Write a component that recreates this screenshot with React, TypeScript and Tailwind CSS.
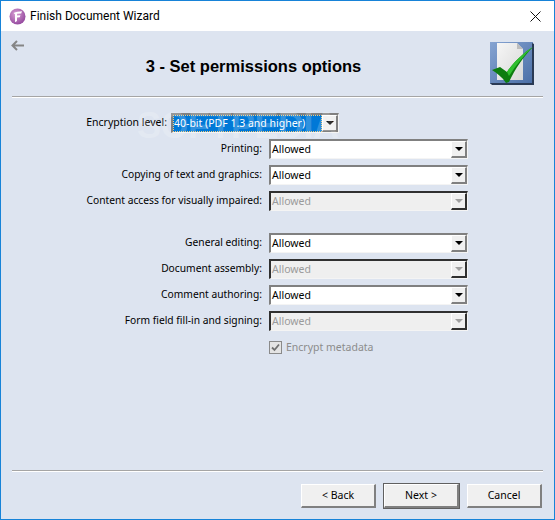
import React from 'react';

const rows = [
  { label: 'Printing:', disabled: false },
  { label: 'Copying of text and graphics:', disabled: false },
  { label: 'Content access for visually impaired:', disabled: true },
];

const rows2 = [
  { label: 'General editing:', disabled: false },
  { label: 'Document assembly:', disabled: true },
  { label: 'Comment authoring:', disabled: false },
  { label: 'Form field fill-in and signing:', disabled: true },
];

function AppLogo() {
  return (
    <svg width="17" height="17" viewBox="0 0 17 17" className="shrink-0">
      <defs>
        <radialGradient id="logoFill" cx="0.4" cy="0.35" r="0.75">
          <stop offset="0" stopColor="#d9a0d4" />
          <stop offset="1" stopColor="#8c3f98" />
        </radialGradient>
      </defs>
      <circle cx="8.5" cy="8.5" r="8" fill="url(#logoFill)" />
      <path d="M4.5 5 C7 3.6 10 3.8 13 3.2 L12.2 5.4 L8 5.8 V7.6 L11.4 7.2 L10.8 9.2 L8 9.6 V13 L6 14.2 V6.2 Z" fill="#fff" />
    </svg>
  );
}

function WizardIcon() {
  return (
    <svg width="46" height="46" viewBox="0 0 46 46" className="shrink-0">
      <defs>
        <linearGradient id="tile" x1="0" y1="0" x2="1" y2="1">
          <stop offset="0" stopColor="#86a4d2" />
          <stop offset="1" stopColor="#4a6ea6" />
        </linearGradient>
        <linearGradient id="sheet" x1="0" y1="0" x2="1" y2="1">
          <stop offset="0" stopColor="#f6f6f6" />
          <stop offset="1" stopColor="#d8d8d8" />
        </linearGradient>
      </defs>
      <rect x="1" y="1" width="43" height="42" fill="url(#tile)" />
      <path d="M1 42 H43 V2 L45 3 V44 H3 Z" fill="#2a3a55" />
      <path d="M8 2 H28 L34 8 V39 H8 Z" fill="url(#sheet)" />
      <path d="M28 2 L34 8 H28 Z" fill="#bdbdbd" />
      <path d="M3 29 L11 26 L18 31 C24 22 34 12 44 6 C35 15 26 28 20 41 L17 42 C13 36 8 32 3 29 Z" fill="#0d7d10" />
      <path d="M18 31 C24 22 34 12 44 6 C35 14 27 24 20 35 Z" fill="#2fbf2f" />
    </svg>
  );
}

function Combo({ value, disabled, focused, w }: { value: string; disabled?: boolean; focused?: boolean; w: string }) {
  return (
    <div
      className={`flex h-[20px] items-stretch border-t-2 border-l-2 border-b border-r border-b-[#f4f4f4] border-r-[#f4f4f4] ${w} ${
        disabled ? 'border-t-[#303030] border-l-[#303030] bg-[#efefef] text-[#9a9a9a]' : 'border-t-[#808080] border-l-[#808080] bg-white text-black'
      }`}
    >
      <div className="flex min-w-0 flex-1 items-center">
        {focused ? (
          <span className="flex h-full w-full items-center border border-dotted border-[#f5c97a] bg-[#0078d7] text-white">
            {value}
          </span>
        ) : (
          <span className="pt-[1px] pl-[1px]">{value}</span>
        )}
      </div>
      <div
        className={`flex w-[16px] items-center justify-center border-t border-l border-white bg-[#f0f0f0] border-b-2 border-r-2 ${
          disabled ? 'border-b-[#303030] border-r-[#303030]' : 'border-b-[#808080] border-r-[#808080]'
        }`}
      >
        <span
          className={`h-0 w-0 border-x-[4px] border-t-[4px] border-x-transparent ${
            disabled ? 'border-t-[#a0a0a0]' : 'border-t-black'
          }`}
        />
      </div>
    </div>
  );
}

function Row({ label, disabled }: { label: string; disabled: boolean }) {
  return (
    <div className="flex h-[26px] items-center">
      <div className="w-[257px] pr-[7px] text-right text-[10.25px]">{label}</div>
      <Combo value="Allowed" disabled={disabled} w="w-[199px]" />
    </div>
  );
}

function Btn({ label, active }: { label: string; active?: boolean }) {
  return (
    <button
      type="button"
      className={`flex h-[24px] w-[75px] items-center justify-center bg-[#f0f0f0] text-black border-t border-l border-white border-b-2 border-r-2 border-b-[#808080] border-r-[#808080] ${
        active ? 'outline outline-1 outline-[#606060]' : ''
      }`}
    >
      {label}
    </button>
  );
}

export default function App() {
  return (
    <div className="relative flex h-[520px] w-[555px] flex-col overflow-hidden border border-[#1783d8] bg-[#dde4f0] text-[10.5px] font-['Noto_Sans',sans-serif] text-black">
      {/* Title bar */}
      <div className="flex h-[30px] shrink-0 items-center bg-white pl-[8px] pr-[8px]">
        <AppLogo />
        <span className="ml-[4px] flex-1 text-[12px] font-['Roboto',sans-serif]">Finish Document Wizard</span>
        <svg width="11" height="11" viewBox="0 0 11 11" className="mr-[5px]">
          <path d="M0.5 0.5 L10.5 10.5 M10.5 0.5 L0.5 10.5" stroke="#111" strokeWidth="1" fill="none" />
        </svg>
      </div>

      {/* Header */}
      <div className="mx-[11px] flex h-[66px] shrink-0 border-b border-b-[#a5a5a5] shadow-[0_1px_0_#fff]">
        <svg width="13" height="11" viewBox="0 0 13 11" className="mt-[9px] ml-[-1px]">
          <path d="M6 1 L1.5 5.5 L6 10 M2 5.5 H13" stroke="#858585" strokeWidth="2" fill="none" />
        </svg>
        <div className="flex-1 pt-[25px] pr-[6px] text-center text-[16.5px] leading-[20px] font-bold font-['Liberation_Sans',sans-serif]">
          3 - Set permissions options
        </div>
        <div className="pt-[10px] pr-[8px]">
          <WizardIcon />
        </div>
      </div>

      {/* Form */}
      <div className="flex flex-1 flex-col pt-[13px] pl-[11px]">
        <div className="flex h-[26px] items-center">
          <div className="w-[159px] pr-[4px] text-right">Encryption level:</div>
          <Combo value="40-bit (PDF 1.3 and higher)" focused w="w-[168px]" />
        </div>
        {rows.map((r) => (
          <Row key={r.label} label={r.label} disabled={r.disabled} />
        ))}
        <div className="h-[16px]" />
        {rows2.map((r) => (
          <Row key={r.label} label={r.label} disabled={r.disabled} />
        ))}
        <div className="flex h-[26px] items-center pl-[257px] text-[#8c8c8c]">
          <span className="mr-[4px] flex h-[13px] w-[13px] items-center justify-center border border-[#8a8a8a] bg-[#e4e4e4]">
            <svg width="9" height="9" viewBox="0 0 9 9">
              <path d="M1 4.5 L3.5 7 L8 1.5" stroke="#707070" strokeWidth="1.8" fill="none" />
            </svg>
          </span>
          <span className="pt-[2px]">Encrypt metadata</span>
        </div>
      </div>

      {/* Footer */}
      <div className="mx-[11px] flex h-[49px] shrink-0 items-start justify-end gap-[8px] border-t border-t-[#a5a5a5] pt-[13px] pr-[1px] shadow-[inset_0_1px_0_#fff]">
        <Btn label="< Back" />
        <Btn label="Next >" active />
        <Btn label="Cancel" />
      </div>

      {/* watermark baked into the screenshot */}
      <div className="pointer-events-none absolute left-[136px] top-[105px] text-[36px] leading-[40px] font-bold tracking-[-0.5px] text-white/20 font-['Liberation_Sans',sans-serif]">
        SOFTPEDIA
      </div>
    </div>
  );
}
